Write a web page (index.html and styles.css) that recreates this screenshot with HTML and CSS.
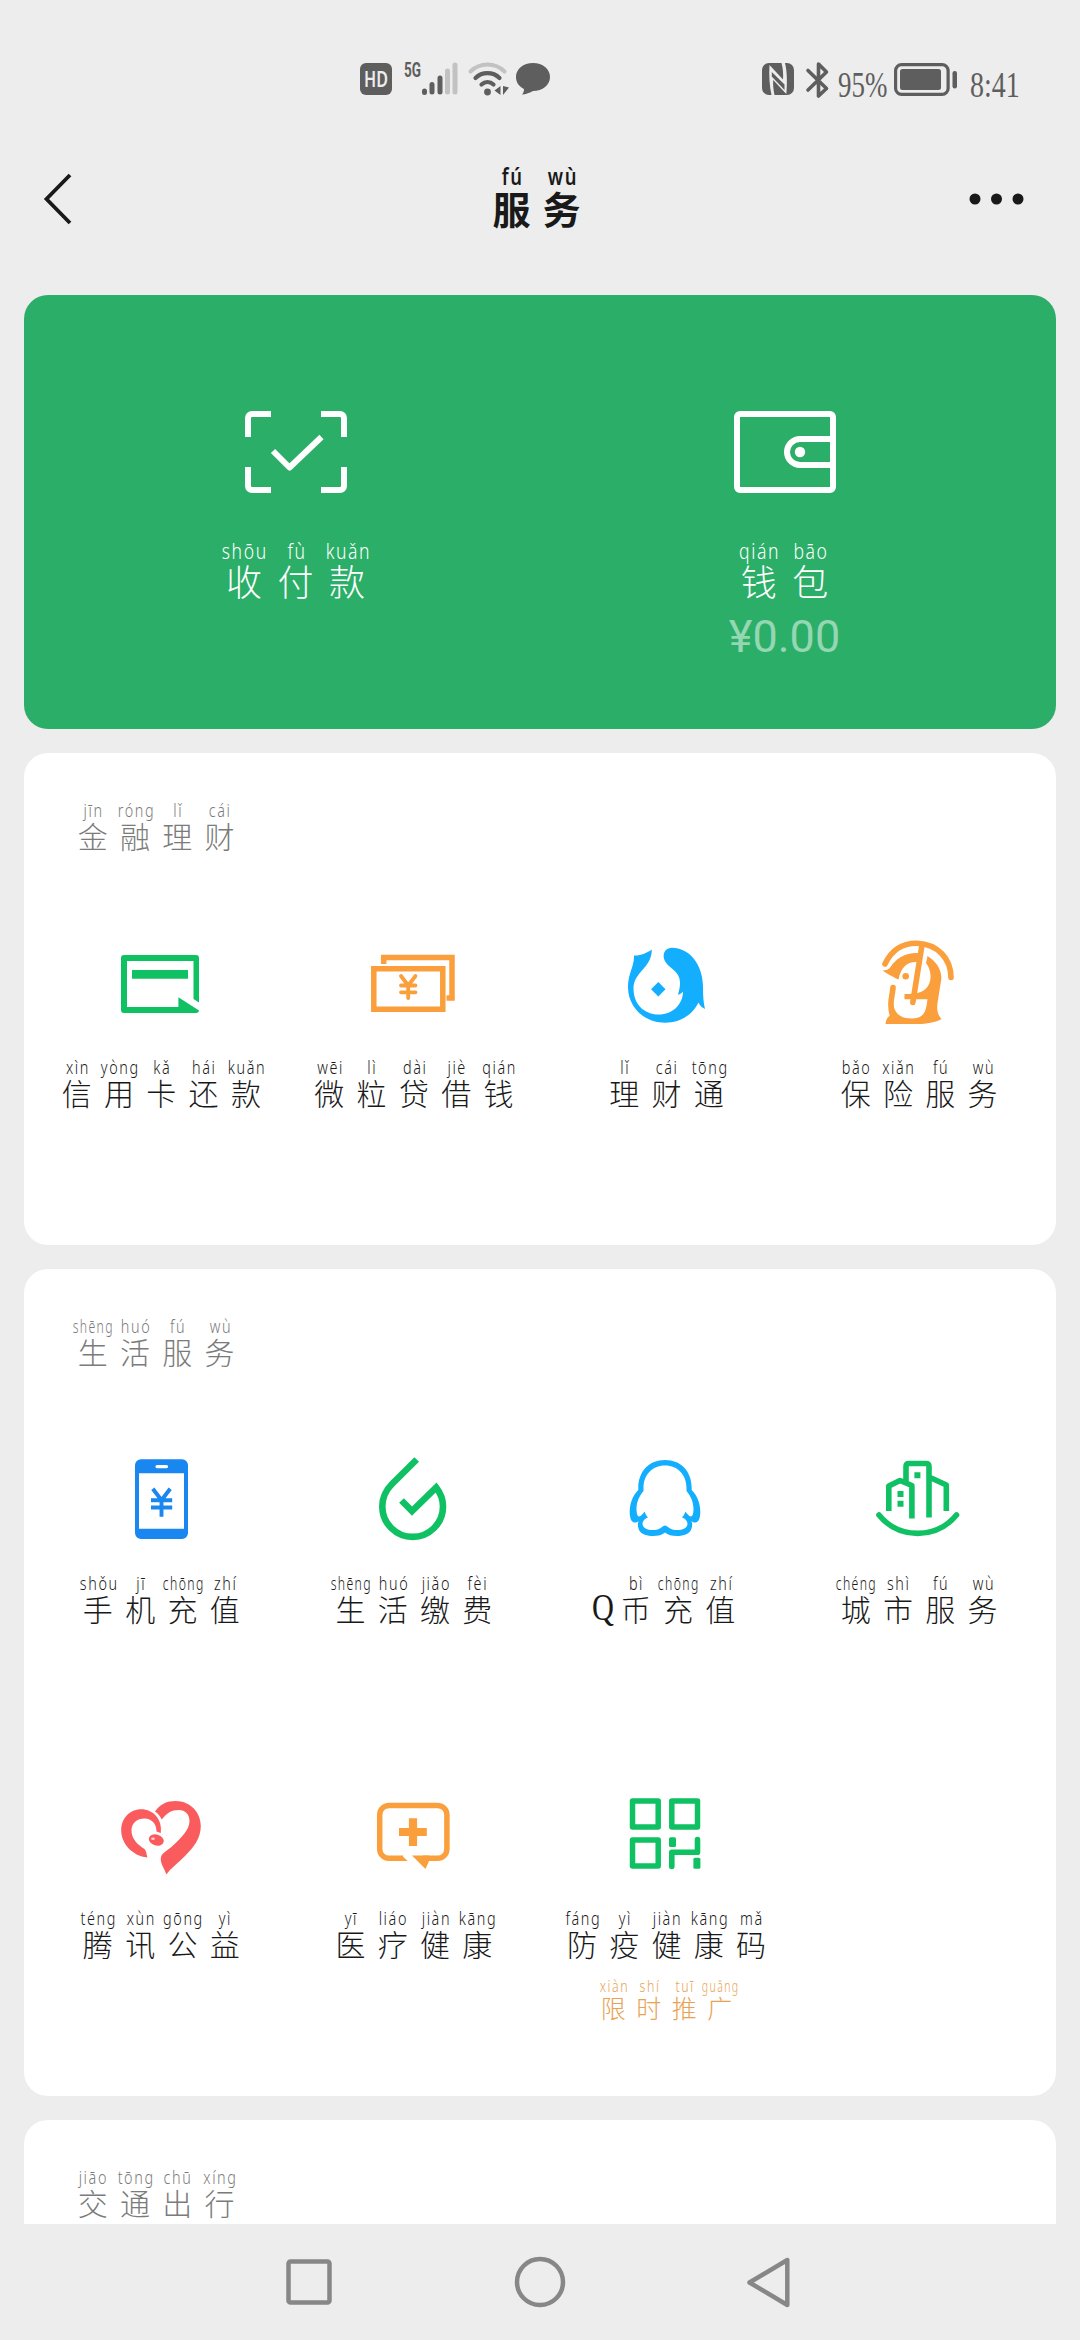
FILE: index.html
```html
<!DOCTYPE html>
<html lang="zh-CN">
<head>
<meta charset="utf-8">
<title>服务</title>
<link rel="stylesheet" href="styles.css">
</head>
<body>
<div class="phone">
  <header class="status">
    <div class="status-left">
      <svg class="ic-hd" width="32" height="32" viewBox="0 0 32 32"><rect width="32" height="32" rx="6" fill="#5e5e5e"/><text x="16" y="23.500" text-anchor="middle" textLength="24" lengthAdjust="spacingAndGlyphs" class="hd">HD</text></svg>
      <svg class="ic-signal" width="54" height="34" viewBox="0 0 54 34"><text x="0" y="15" textLength="17" lengthAdjust="spacingAndGlyphs" class="g5">5G</text><g stroke-width="5" stroke-linecap="round"><path d="M20.500 29v1.500M28 22.500v7.500M36 16v14" stroke="#5e5e5e"/><path d="M43.500 9v21M51 3v27" stroke="#c2c2c2"/></g></svg>
      <svg class="ic-wifi" width="42" height="34" viewBox="0 0 42 34" fill="none" stroke-linecap="round"><path d="M2.500 9.500C12 .2 27 .2 36.500 9.500" stroke="#c2c2c2" stroke-width="4"/><path d="M7.500 16C14 9.500 25 9.500 31.500 16M13.500 22.500C17 19.300 22 19.300 25.500 22.500" stroke="#5e5e5e" stroke-width="4.200"/><circle cx="19.500" cy="30" r="3.400" fill="#5e5e5e"/><path d="M32.500 24v9l-6-4.500zM35 24v9l6-7.500z" fill="#5e5e5e"/></svg>
      <svg width="34" height="34" viewBox="0 0 34 34"><path d="M17 1c9.600 0 17 6 17 14s-7.400 14-17 14c-3 1.500-7 3.500-11 3.500 1.500-1.500 2-3.500 2-5.500C3 24.500 0 20.500 0 15 0 7 7.400 1 17 1z" fill="#5e5e5e"/></svg>
    </div>
    <div class="status-right">
      <svg class="ic-nfc" width="32" height="32" viewBox="0 0 32 32"><rect width="32" height="32" rx="7" fill="#5e5e5e"/><path d="M7.500 2L21 16.500C21.500 10 20.800 5 19.500 0H23C25.300 9 25.300 21 24.300 31L11.200 17C10.800 22 11.500 27 12.500 32H9.500C7.500 23 6.800 12 7.500 2z" fill="#ededed"/><path d="M9.800 9v4.500L22.500 27v-5.500z" fill="#5e5e5e"/></svg>
      <svg class="ic-bt" width="23" height="36" viewBox="0 0 23 36" fill="none" stroke="#5e5e5e" stroke-width="3.600" stroke-linecap="round" stroke-linejoin="round"><path d="M2 8.500L20.500 26.500 12.500 34V2l8 8L2 28"/></svg>
      <span class="pct"><span>95%</span></span>
      <svg class="ic-batt" width="63" height="33" viewBox="0 0 63 33"><rect x="1.600" y="1.600" width="52.500" height="29.800" rx="6" fill="none" stroke="#5e5e5e" stroke-width="3.200"/><rect x="6" y="6" width="41" height="21" rx="2.500" fill="#5e5e5e"/><rect x="58.500" y="8" width="4.500" height="17.500" rx="2.200" fill="#5e5e5e"/></svg>
      <span class="clock"><span>8:41</span></span>
    </div>
  </header>

  <nav class="bar">
    <svg class="back" width="30" height="54" viewBox="0 0 30 54" fill="none" stroke="#191919" stroke-width="3.800"><path d="M27 3L3.500 27 27 51"/></svg>
    <h1 class="py title"><span><i>fú</i>服</span><span><i>wù</i>务</span></h1>
    <svg class="more" width="56" height="12" viewBox="0 0 56 12" fill="#191919"><circle cx="6" cy="6" r="5.500"/><circle cx="27.500" cy="6" r="5.500"/><circle cx="49" cy="6" r="5.500"/></svg>
  </nav>

  <main>
    <section class="card pay">
      <a class="pay-item">
        <svg width="102" height="82" viewBox="0 0 102 82" fill="none" stroke="#fff" stroke-width="6"><path d="M3 26V7a4 4 0 0 1 4-4h19M76 3h19a4 4 0 0 1 4 4v19M99 56v19a4 4 0 0 1-4 4H76M26 79H7a4 4 0 0 1-4-4V56"/><path d="M28 40l16.500 16.500L76.500 26" stroke-linejoin="round"/></svg>
        <span class="py big"><span><i>shōu</i>收</span><span><i>fù</i>付</span><span><i>kuǎn</i>款</span></span>
      </a>
      <a class="pay-item">
        <svg width="102" height="82" viewBox="0 0 102 82" fill="none" stroke="#fff" stroke-width="6"><rect x="3" y="3" width="96" height="76" rx="3"/><path d="M99 28H66a13 13 0 0 0 0 26h33"/><circle cx="66" cy="41" r="5.200" fill="#fff" stroke="none"/></svg>
        <span class="py big"><span><i>qián</i>钱</span><span><i>bāo</i>包</span></span>
        <span class="amount">¥0.00</span>
      </a>
    </section>

    <section class="card finance">
      <h2 class="py head"><span><i>jīn</i>金</span><span><i>róng</i>融</span><span><i>lǐ</i>理</span><span><i>cái</i>财</span></h2>
      <div class="grid">
        <a class="item">
          <svg class="icon green" viewBox="0 0 100 100"><path d="M14 20h72a3 3 0 0 1 3 3v44.500L83.500 64V26H17v46h51.400V62.300L89 75.500c0 1.500-1 2.500-3 2.500H14a3 3 0 0 1-3-3V23a3 3 0 0 1 3-3z"/><path d="M22 35h56v8.700H22z"/></svg>
          <span class="py"><span><i>xìn</i>信</span><span><i>yòng</i>用</span><span><i>kǎ</i>卡</span><span><i>hái</i>还</span><span><i>kuǎn</i>款</span></span>
        </a>
        <a class="item">
          <svg class="icon line orange" viewBox="0 0 100 100" stroke-width="5.500"><path d="M20.700 29v-6.500H89V63h-5.500M10.800 33.700h69v40.500h-69z"/><path d="M38 41l7.200 9.500L52.500 41M38 50.500h14.500M38 57.300h14.500M45.200 50.500V63" stroke-width="3.800" stroke-linecap="round"/></svg>
          <span class="py"><span><i>wēi</i>微</span><span><i>lì</i>粒</span><span><i>dài</i>贷</span><span><i>jiè</i>借</span><span><i>qián</i>钱</span></span>
        </a>
        <a class="item">
          <svg class="icon sky" viewBox="0 0 100 100"><path d="M36.800 14.500C32 18 25 21 19 20.500C19.500 31 13 38 13 52C13 72 29 87.700 50 87.700C66 87.700 78 79 83.500 67.500C85 71 87 72.500 90 74C88.500 68 88 61 88 52C88 29 74 12.700 57 12.700C49 12.700 46.500 21 50.500 27C55 34 64.500 36 65 47C65.200 52 64 56 63 59.800C65 59.500 67 58 68 56.500C68 69 58 79.500 43.500 79.500C29 79.500 18.500 69 18.500 53.500C18.500 37 37 33 36.800 14.500z"/><path d="M43.300 47l7.200 7.300-7.200 7.300-7.200-7.300z"/></svg>
          <span class="py"><span><i>lǐ</i>理</span><span><i>cái</i>财</span><span><i>tōng</i>通</span></span>
        </a>
        <a class="item">
          <svg class="icon orange" viewBox="0 0 100 100"><path d="M17 29C24 14 36 8 49 8.200C70 9 83 24 83 42.500M54 10L44.800 67.500M25 52.500C24.500 62 20.500 68 24.500 80" fill="none" stroke="currentColor" stroke-width="5.600" stroke-linecap="round"/><path d="M14.600 35.500C18 35.500 21 34.500 22.500 32C28 23 38 17 51.500 18L50.500 27C39 26 33 32 30.500 44.500C26 42.500 19 38.500 14.600 35.500z"/><path d="M59.500 21C68 26 74 35 73.300 44L69.500 68C68.500 76 70 80 73.500 84C68 87.500 58 89 50 89H17.500C18 84 20 82 22 80.500L24 66C27 80 33 83.500 44 83.500C56 83.500 58 77 59.500 64.300H36.500V59C50 59 58 57 61.500 48C64 41 62 33 58 28z"/><circle cx="37.700" cy="41.300" r="3.300"/></svg>
          <span class="py"><span><i>bǎo</i>保</span><span><i>xiǎn</i>险</span><span><i>fú</i>服</span><span><i>wù</i>务</span></span>
        </a>
      </div>
    </section>

    <section class="card life">
      <h2 class="py head"><span><i class="w4">shēng</i>生</span><span><i>huó</i>活</span><span><i>fú</i>服</span><span><i>wù</i>务</span></h2>
      <div class="grid">
        <a class="item">
          <svg class="icon blue" viewBox="0 0 100 100"><path fill-rule="evenodd" d="M31 8.300h41a6 6 0 0 1 6 6V82a6 6 0 0 1-6 6H31a6 6 0 0 1-6-6V14.300a6 6 0 0 1 6-6zM29 22.300v55.400h45V22.300zM47 14a1 1 0 0 0 0 3.200h9.500a1 1 0 0 0 0-3.200z"/><path d="M42.800 37.700l8.700 11.500 8.700-11.500M41 49.200h21.200M41 56.500h21.200M51.500 49.200v16.500" fill="none" stroke="currentColor" stroke-width="3.900"/></svg>
          <span class="py"><span><i>shǒu</i>手</span><span><i>jī</i>机</span><span><i class="w4">chōng</i>充</span><span><i>zhí</i>值</span></span>
        </a>
        <a class="item">
          <svg class="icon line green" viewBox="0 0 100 100" stroke-width="6.600"><path d="M53.700 8.500L29 33C22.500 39.500 19.300 47 19.300 55.500A30.300 30.300 0 0 0 80 55.500C80 48 77.500 42 73.200 36.500L49 60 38.500 49.500"/></svg>
          <span class="py"><span><i class="w4">shēng</i>生</span><span><i>huó</i>活</span><span><i>jiǎo</i>缴</span><span><i>fèi</i>费</span></span>
        </a>
        <a class="item">
          <svg class="icon sky" viewBox="0 0 100 100"><path fill-rule="evenodd" d="M50 9C34 9 23.300 20 23.300 37.500V39C17 45 14.700 54 14.700 61C14.700 68 17 71.500 19.500 71.500C21.500 71.500 22.500 71 23.500 70C22.500 73 22.800 75 23.500 77.500C25 83 31 85 38 85C43 85 47.500 84 50 81.500C52.500 84 57 85 62 85C69 85 75 83 76.500 77.500C77.200 75 77.500 73 76.500 70C77.500 71 78.500 71.500 80.500 71.500C83 71.500 85.300 68 85.300 61C85.300 54 83 45 76.700 39V37.500C76.700 20 66 9 50 9zM50 14.500C63 14.500 71.500 24 71.500 37V40C76.500 46 78.500 52 78.500 58C78.500 62 77.500 65.500 76 65.500C74 65.500 71.500 62 70.500 60.500C69.500 63 68.500 65 67 66.500C71 68 72.500 70.500 72.500 73C72 77 68 79 62 79C57 79 54.500 77.500 53 76C51 74 49 74 47 76C45.500 77.500 43 79 38 79C32 79 28 77 27.500 73C27.500 70.500 29 68 33 66.500C31.500 65 30.500 63 29.500 60.500C28.500 62 26 65.500 24 65.500C22.500 65.500 21.500 62 21.500 58C21.500 52 23.500 46 28.500 40V37C28.500 24 37 14.500 50 14.500z"/></svg>
          <span class="py"><b><em>Q</em></b><span><i>bì</i>币</span><span><i class="w4">chōng</i>充</span><span><i>zhí</i>值</span></span>
        </a>
        <a class="item">
          <svg class="icon line green" viewBox="0 0 100 100" stroke-width="5.600"><path d="M11 64C31 88.500 68 88.500 88.500 64" stroke-linecap="round"/><path d="M20.800 60V35L32 29.500l11.900 5V67.500M38 31V15.500Q38 12.500 41 12.500H58Q61 12.500 61 15.500V66.500M61 26l17.300 8V60" stroke-linejoin="round"/><path d="M29.500 43h6M29.500 52.700h6M46.400 24.300h6" stroke-width="6"/></svg>
          <span class="py"><span><i class="w4">chéng</i>城</span><span><i>shì</i>市</span><span><i>fú</i>服</span><span><i>wù</i>务</span></span>
        </a>
        <a class="item">
          <svg class="icon red" viewBox="0 0 100 100"><path d="M45 25.500C50 18 57 15 65.600 15C80 15 90.800 26 90.800 40C90.800 52 84 61 75 70C68 77 61 82 56.300 88.500C55 83 49.500 77 51 71C52 67 57 65 63 59.500C71 52 79.500 44 79.500 35C79.500 28 75 24 69 24C61 24 57 27 51.800 33.500C50 30 48 27.500 45 25.500z"/><path d="M37.400 71.500C22 70 11.200 57 11.200 44.500C11.200 32 20 23.300 31 23.300C44 23.300 52.500 34 50.800 47L46.500 45.500C46.500 38 42 32.500 34.500 32.500C27 32.500 21.500 37 21.500 44.500C21.500 53 28 59 34.600 63C36.500 65.500 36.500 68.500 37.400 71.500z"/><ellipse cx="46.300" cy="54" rx="7.600" ry="5.500" transform="rotate(15 46.300 54)"/><ellipse cx="43" cy="52.700" rx="1.900" ry="1.200" fill="#fff" opacity=".7"/></svg>
          <span class="py"><span><i>téng</i>腾</span><span><i>xùn</i>讯</span><span><i>gōng</i>公</span><span><i>yì</i>益</span></span>
        </a>
        <a class="item">
          <svg class="icon orange" viewBox="0 0 100 100"><path d="M40 72.300H26A9.300 9.300 0 0 1 16.700 63V28.700A9.300 9.300 0 0 1 26 19.400H74.600A9.300 9.300 0 0 1 83.900 28.700V63A9.300 9.300 0 0 1 74.600 72.300H60" fill="none" stroke="currentColor" stroke-width="5.500"/><path d="M38.700 69.550l6 5.500H38zM49 69.550H66v5.500l-3.500 8zM45.900 32.300h8.200v9.800h9.700v8h-9.700V60h-8.200v-9.900H36v-8h9.900z"/></svg>
          <span class="py"><span><i>yī</i>医</span><span><i>liáo</i>疗</span><span><i>jiàn</i>健</span><span><i>kāng</i>康</span></span>
        </a>
        <a class="item">
          <svg class="icon green" viewBox="0 0 100 100"><g fill="none" stroke="currentColor" stroke-width="5.500" stroke-linejoin="round"><path d="M17.500 15h25.700v26H17.500zM56.800 15h25.700v26H56.800zM17.500 54h25.700v26H17.500z"/></g><rect x="54" y="51.300" width="7" height="9.700" rx="1.500"/><rect x="78.400" y="71.700" width="7" height="11" rx="1.500"/><path d="M56.800 80.500V66.200H82.500V53.500" fill="none" stroke="currentColor" stroke-width="5.600" stroke-linecap="round" stroke-linejoin="round"/></svg>
          <span class="py"><span><i>fáng</i>防</span><span><i>yì</i>疫</span><span><i>jiàn</i>健</span><span><i>kāng</i>康</span><span><i>mǎ</i>码</span></span>
          <span class="py promo"><span><i>xiàn</i>限</span><span><i>shí</i>时</span><span><i>tuī</i>推</span><span><i class="w4">guǎng</i>广</span></span>
        </a>
      </div>
    </section>

    <section class="card travel">
      <h2 class="py head"><span><i>jiāo</i>交</span><span><i>tōng</i>通</span><span><i>chū</i>出</span><span><i>xíng</i>行</span></h2>
    </section>
  </main>

  <footer class="keys">
    <svg width="50" height="50" viewBox="0 0 50 50"><rect x="4.500" y="4.500" width="41" height="41" rx="2"/></svg>
    <svg width="50" height="50" viewBox="0 0 50 50"><circle cx="25" cy="25" r="23"/></svg>
    <svg width="50" height="50" viewBox="0 0 50 50"><path d="M41.300 3v45L3.500 25.500z" stroke-linejoin="round"/></svg>
  </footer>
</div>
</body>
</html>
```
FILE: styles.css
```css
* { box-sizing: border-box; margin: 0; padding: 0; }

body {
  background: #ededed;
  color: #191919;
  font-family: "Noto Sans CJK SC", sans-serif;
}

svg { display: block; flex: none; overflow: visible; }

.phone {
  width: 1080px;
  height: 2340px;
  display: flex;
  flex-direction: column;
  overflow: hidden;
}

/* system status bar */
.status {
  height: 128px;
  flex: none;
  display: flex;
  justify-content: space-between;
  align-items: flex-start;
  padding: 62px 61px 0 360px;
  color: #5e5e5e;
}
.status-left, .status-right { display: flex; align-items: flex-start; }
.ic-hd { margin: 1px 12px 0 0; }
.ic-signal { margin-right: 10px; }
.ic-wifi { margin-right: 6px; }
.hd { font: 600 21px "Noto Sans", sans-serif; fill: #ededed; }
.g5 { font: 700 20px Roboto, sans-serif; fill: #5e5e5e; }
.ic-nfc { margin: 1px 12px 0 0; }
.ic-bt { margin-right: 9px; }
.ic-batt { margin: 1px 13px 0 7px; }
.pct, .clock {
  width: 49px;
  height: 36px;
  margin-top: 6px;
  font: 35px/36px "Liberation Serif", serif;
  white-space: nowrap;
}
.pct > span, .clock > span { display: inline-block; transform-origin: 0 0; }
.pct > span { transform: scaleX(.77); }
.clock > span { transform: scaleX(.8); }

/* title bar */
.bar {
  height: 167px;
  flex: none;
  display: flex;
  justify-content: space-between;
  align-items: flex-start;
  padding: 39px 55px 0 43px;
}
.back { margin-top: 5px; }
.more { margin-top: 26px; }

/* characters with their pinyin above */
.py {
  display: flex;
  justify-content: center;
  align-items: flex-end;
  font-size: 30px;
  line-height: 34px;
  font-weight: 300;
}
.py > span {
  width: 42.300px;
  display: flex;
  flex-direction: column;
  align-items: center;
  white-space: nowrap;
}
.py i {
  font: 300 18px/20px "Noto Sans", sans-serif;
  letter-spacing: 2px;
  margin: 0 -9px -2px -7px;
  transform: scaleX(.8);
}
.py i.w4 { transform: scaleX(.68); }
.py b { width: 23px; font: 400 37px/34px "Liberation Serif", serif; }
.py em { display: inline-block; font-style: normal; transform: scaleX(.82); transform-origin: 0 0; }

.title { font-size: 38px; line-height: 42px; font-weight: 700; margin: -2px 0 0 31px; }
.title > span { width: 50px; }
.title i { font-size: 23px; line-height: 23px; font-weight: 600; margin-bottom: -1.500px; }

main {
  flex: 1;
  min-height: 0;
  overflow: hidden;
  padding: 0 24px;
  display: flex;
  flex-direction: column;
  gap: 24px;
}
.card { flex: none; background: #fff; border-radius: 24px; }

.pay {
  height: 434px;
  background: #2bae67;
  color: #fff;
  display: grid;
  grid-template-columns: 489px 489px;
  padding: 116px 27px 0;
}
.pay-item { display: flex; flex-direction: column; align-items: center; }
.big { margin-top: 45px; font-size: 36px; line-height: 42px; }
.big > span { width: 51.500px; }
.big i { font-size: 22px; line-height: 24px; margin-bottom: -3px; }
.amount { font: 400 45px/50px Roboto, sans-serif; color: rgba(255, 255, 255, .5); margin-top: 11px; }

.finance { height: 492px; }
.life { height: 827px; }
.travel { height: 300px; }

.head {
  justify-content: flex-start;
  padding: 46.500px 0 0 47.500px;
  color: #7b7b7b;
}
.grid {
  display: grid;
  grid-template-columns: repeat(4, 252.600px);
  grid-auto-rows: 335px;
  padding: 83.500px 0 0 10px;
}
.item { display: flex; flex-direction: column; align-items: center; }
.item .py { padding-left: 2px; }
.icon { width: 100px; height: 100px; fill: currentColor; margin-bottom: 21.500px; }
.line { fill: none; stroke: currentColor; }
.green { color: #10c163; }
.orange { color: #fa9f3b; }
.sky { color: #13aefe; }
.blue { color: #1a86f0; }
.red { color: #fa5b5c; }

.promo { margin-top: 17px; font-size: 25px; line-height: 28px; color: #e9a254; }
.promo > span { width: 35.500px; }
.promo i { font-size: 15.500px; line-height: 18px; margin-bottom: -2px; }

/* system navigation keys */
.keys {
  height: 116px;
  flex: none;
  display: flex;
  justify-content: center;
  align-items: center;
  gap: 181px;
  fill: none;
  stroke: #878787;
  stroke-width: 4.500;
}
```
